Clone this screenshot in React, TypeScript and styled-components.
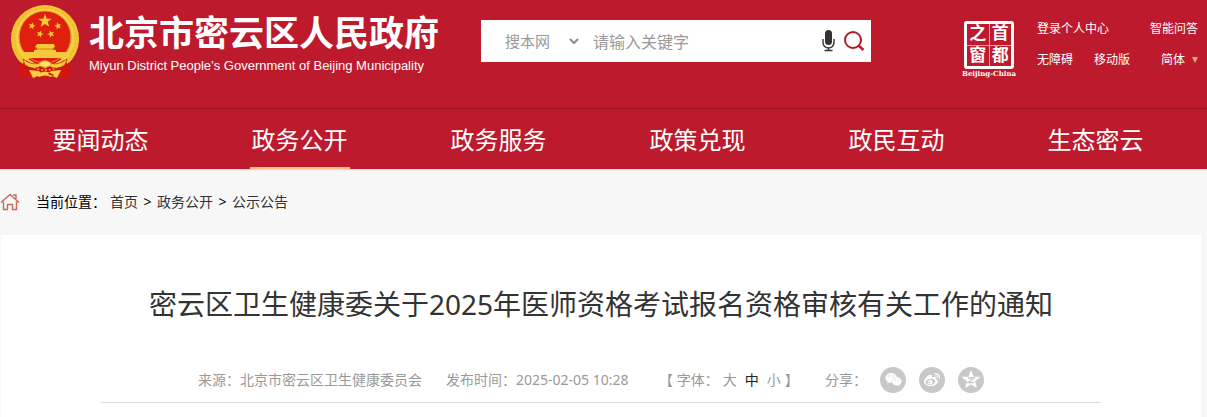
import React from "react";
import styled, { createGlobalStyle } from "styled-components";
import { FaWeixin, FaWeibo } from "react-icons/fa";

const RED = "#bd1a2d";

const GlobalStyle = createGlobalStyle`
  * { box-sizing: border-box; }
  body {
    margin: 0;
    background: #f7f7f7;
    color: #333;
    font-family: "Noto Sans", "Noto Sans CJK SC", sans-serif;
    font-size: 14px;
    line-height: 20px;
  }
  a { color: inherit; text-decoration: none; }
`;

const Header = styled.header`
  background: ${RED};
  color: #fff;
  box-shadow: 0 1px 1px rgba(189, 26, 45, 0.15);
`;

const Banner = styled.div`
  display: flex;
  align-items: flex-start;
  height: 108px;
  padding: 0 9px 0 10px;
`;

const Brand = styled.a`
  display: flex;
  gap: 9px;
  padding-top: 4px;
  white-space: nowrap;
`;

const Emblem = styled.svg`
  width: 70px;
  height: 76px;
  flex: none;
`;

const BrandText = styled.div`
  padding-top: 7px;
`;

const BrandName = styled.div`
  font-family: "Noto Sans CJK SC", sans-serif;
  font-size: 35px;
  font-weight: 700;
  line-height: 40px;
`;

const BrandEnglish = styled.div`
  margin-top: 6px;
  font-family: "Liberation Sans", sans-serif;
  font-size: 13px;
  line-height: 18px;
`;

const Search = styled.form`
  display: flex;
  align-items: center;
  flex: none;
  width: 390px;
  height: 42px;
  margin: 20px 0 0 42px;
  padding: 0 6px 0 24px;
  background: #fff;
`;

const ScopeField = styled.label`
  display: flex;
  align-items: center;
  width: 88px;
  color: #999;
`;

const Scope = styled.select`
  appearance: none;
  width: 64px;
  padding: 0;
  border: 0;
  background: none;
  color: #999;
  font: 15px/20px "Noto Sans CJK SC", sans-serif;
`;

const Keyword = styled.input`
  flex: 1;
  min-width: 0;
  height: 40px;
  padding: 0;
  border: 0;
  outline: 0;
  color: #333;
  font: 16px/24px "Noto Sans CJK SC", sans-serif;
  &::placeholder { color: #999; opacity: 1; }
`;

const IconButton = styled.button`
  display: flex;
  padding: 0;
  border: 0;
  background: none;
  margin-left: 8px;
`;

const Seal = styled.a`
  display: flex;
  flex-direction: column;
  align-items: center;
  width: 56px;
  margin: 21px 0 0 auto;
`;

const SealFrame = styled.span`
  display: grid;
  grid-template-columns: 1fr 1fr;
  grid-template-rows: 1fr 1fr;
  gap: 1px;
  width: 50px;
  height: 48px;
  border: 3px solid #fff;
  border-radius: 3px;
  background: #e9a9b0;
`;

const SealChar = styled.span`
  display: flex;
  align-items: center;
  justify-content: center;
  background: ${RED};
  font: 600 17px/18px "Liberation Sans", "Noto Sans CJK SC", sans-serif;
`;

const SealCaption = styled.span`
  font: 700 7px/9px "DejaVu Serif", serif;
`;

const Tools = styled.nav`
  display: flex;
  flex-direction: column;
  gap: 13px;
  width: 161px;
  margin: 20px 0 0 20px;
  font-size: 12px;
  line-height: 18px;
`;

const ToolRow = styled.div`
  display: flex;
  justify-content: space-between;
`;

const ToolGroup = styled.div`
  display: flex;
  gap: 21px;
`;

const Language = styled.button`
  display: flex;
  align-items: center;
  gap: 7px;
  padding: 0;
  border: 0;
  background: none;
  color: inherit;
  font: inherit;
`;

const MainNav = styled.nav`
  display: grid;
  grid-template-columns: repeat(6, 1fr);
  padding: 0 12px 0 1px;
  border-top: 1px solid #931222;
`;

const NavCell = styled.div`
  display: flex;
  justify-content: center;
`;

const NavLink = styled.a<{ $active?: boolean }>`
  width: 100px;
  height: 60px;
  border-bottom: 2px solid ${(p) => (p.$active ? "#ffc184" : "transparent")};
  font-size: 24px;
  line-height: 62px;
  text-align: center;
  white-space: nowrap;
`;

const Crumbs = styled.nav`
  display: flex;
  align-items: center;
  height: 66px;
  color: #333;
`;

const CrumbLabel = styled.span`
  margin: 0 4px 0 16px;
  color: #000;
`;

const Separator = styled.span`
  width: 19px;
  color: #000;
  text-align: center;
`;

const Article = styled.main`
  margin: 0 6px 0 1px;
  padding: 48px 100px 14px;
  background: #fff;
`;

const Title = styled.h1`
  margin: 0;
  font-size: 28px;
  font-weight: 400;
  line-height: 42px;
  text-align: center;
  white-space: nowrap;
`;

const Meta = styled.div`
  display: flex;
  align-items: center;
  height: 46px;
  margin-top: 32px;
  padding-left: 97px;
  border-bottom: 1px solid #dcdcdc;
  color: #999;
  white-space: nowrap;
`;

const Source = styled.span`
  width: 248px;
`;

const Published = styled.span`
  width: 213px;
`;

const FontSize = styled.div`
  display: flex;
  width: 166px;
`;

const SizeButton = styled.button<{ $active?: boolean }>`
  width: 22px;
  padding: 0;
  border: 0;
  background: none;
  color: ${(p) => (p.$active ? "#222" : "inherit")};
  font: inherit;
`;

const Share = styled.div`
  display: flex;
  align-items: center;
`;

const ShareLabel = styled.span`
  width: 55px;
`;

const ShareButton = styled.button`
  display: flex;
  align-items: center;
  justify-content: center;
  width: 26px;
  height: 26px;
  margin-right: 13px;
  padding: 0;
  border: 0;
  border-radius: 50%;
  background: #c8c8c8;
  color: #fff;
`;

const STAR = "M0-10 2.4-3.2 9.5-3.1 3.8 1.2 5.9 8.1 0 4-5.9 8.1-3.8 1.2-9.5-3.1-2.4-3.2Z";

const smallStars = [
  [22, 22, 15],
  [48, 22, -15],
  [30, 30, 20],
  [41, 30, -20],
];

function NationalEmblem() {
  return (
    <Emblem viewBox="0 0 70 76" aria-hidden="true">
      <path d="M10 52L10 72l8 2 5-2 12 3 12-3 5 2 8-2V52z" fill="#d3160f" />
      <path d="M13 61v11M18 65v8M52 65v8M57 61v11" stroke="#96100f" strokeWidth="2" />
      <path d="M12 60A34 34 0 1 1 58 60L50 54H20Z" fill="#f4c534" />
      <circle cx="35" cy="35" r="31" fill="none" stroke="#ecb732" strokeWidth="1.5" strokeDasharray="2 2" pathLength="200" />
      <circle cx="35" cy="34" r="28" fill="none" stroke="#f8d24a" strokeWidth="2" />
      <circle cx="35" cy="33" r="26" fill="#e0200f" stroke="#e39a22" />
      <g fill="#f6c83a">
        <path d={STAR} transform="translate(35 17) scale(.72)" />
        {smallStars.map(([x, y, r]) => (
          <path key={x} d={STAR} transform={`translate(${x} ${y}) rotate(${r}) scale(.38)`} />
        ))}
        <path d="M27 40h17l1 3-2 1v2h3v3H24v-3h3v-2l-2-1z" />
        <path d="M12 48h46l-3 6H15z" />
      </g>
      <path d="M25 45h20" stroke="#d5860f" />
      <path d="M11 58q5 8 12 9l-3 7-10-3zM59 58q-5 8-12 9l3 7 10-3z" fill="#d3160f" />
      <path d="M13 55q11 8 18 3 4-4 8 0 7 5 18-3l-2 6q-9 6-16 1l-4 3-4-3q-7 5-16-1z" fill="#f7cb39" stroke="#cb1910" strokeWidth=".7" />
      <ellipse cx="35" cy="60" rx="6" ry="3" fill="#ffe366" stroke="#e0a01d" strokeWidth=".7" />
      <path d="M19 66l10 1 3 3-9 4zM51 66l-10 1-3 3 9 4zM26 71q9-7 18 0l-3 2q-6-3-12 0z" fill="#f8cf42" />
    </Emblem>
  );
}

const navItems = ["要闻动态", "政务公开", "政务服务", "政策兑现", "政民互动", "生态密云"];

export default function App() {
  return (
    <>
      <GlobalStyle />
      <Header>
        <Banner>
          <Brand href="#">
            <NationalEmblem />
            <BrandText>
              <BrandName>北京市密云区人民政府</BrandName>
              <BrandEnglish>Miyun District People’s Government of Beijing Municipality</BrandEnglish>
            </BrandText>
          </Brand>
          <Search onSubmit={(e) => e.preventDefault()}>
            <ScopeField>
              <Scope aria-label="搜索范围">
                <option>搜本网</option>
              </Scope>
              <svg width="10" height="8" viewBox="0 0 10 8" fill="none" stroke="#8c8c8c" strokeWidth="2" aria-hidden="true">
                <path d="M1 2l4 4 4-4" />
              </svg>
            </ScopeField>
            <Keyword aria-label="关键字" placeholder="请输入关键字" />
            <IconButton type="button" aria-label="语音">
              <svg width="13" height="22" viewBox="0 0 13 22" aria-hidden="true">
                <rect x="3" y="0" width="7" height="15" rx="3.5" fill="#333" />
                <path d="M1 9v3.5a5.5 5.5 0 0 0 11 0V9M6.5 18v3M2.5 20.5h8" fill="none" stroke="#333" strokeWidth="1.4" />
              </svg>
            </IconButton>
            <IconButton type="submit" aria-label="搜索">
              <svg width="22" height="20" viewBox="0 0 22 20" fill="none" stroke="#b01c2e" strokeWidth="2" aria-hidden="true">
                <circle cx="10" cy="9" r="8" />
                <path d="M15.5 14.5l5 4.5" strokeWidth="2.4" />
              </svg>
            </IconButton>
          </Search>
          <Seal href="#">
            <SealFrame>
              {["之", "首", "窗", "都"].map((c) => (
                <SealChar key={c}>{c}</SealChar>
              ))}
            </SealFrame>
            <SealCaption>Beijing-China</SealCaption>
          </Seal>
          <Tools>
            <ToolRow>
              <a href="#">登录个人中心</a>
              <a href="#">智能问答</a>
            </ToolRow>
            <ToolRow>
              <ToolGroup>
                <a href="#">无障碍</a>
                <a href="#">移动版</a>
              </ToolGroup>
              <Language type="button">
                简体
                <svg width="6" height="6" viewBox="0 0 6 6" aria-hidden="true">
                  <path d="M0 0h6L3 6z" fill="#e8a46c" />
                </svg>
              </Language>
            </ToolRow>
          </Tools>
        </Banner>
        <MainNav>
          {navItems.map((item) => (
            <NavCell key={item}>
              <NavLink href="#" $active={item === "政务公开"}>
                {item}
              </NavLink>
            </NavCell>
          ))}
        </MainNav>
      </Header>
      <Crumbs>
        <svg width="20" height="18" viewBox="0 0 20 18" fill="none" stroke="#cc6a5a" strokeWidth="1.4" aria-hidden="true">
          <path d="M1 9.5L10 1.5l9 8M13 2h3v4M3.5 8.5v8h4v-5h5v5h4v-8" />
        </svg>
        <CrumbLabel>当前位置：</CrumbLabel>
        <a href="#">首页</a>
        <Separator>&gt;</Separator>
        <a href="#">政务公开</a>
        <Separator>&gt;</Separator>
        <a href="#">公示公告</a>
      </Crumbs>
      <Article>
        <Title>密云区卫生健康委关于2025年医师资格考试报名资格审核有关工作的通知</Title>
        <Meta>
          <Source>来源：北京市密云区卫生健康委员会</Source>
          <Published>发布时间：2025-02-05 10:28</Published>
          <FontSize>
            <span>【 字体：</span>
            <SizeButton type="button">大</SizeButton>
            <SizeButton type="button" $active>中</SizeButton>
            <SizeButton type="button">小</SizeButton>
            <span>】</span>
          </FontSize>
          <Share>
            <ShareLabel>分享：</ShareLabel>
            <ShareButton type="button" aria-label="微信">
              <FaWeixin size={17} />
            </ShareButton>
            <ShareButton type="button" aria-label="微博">
              <FaWeibo size={16} />
            </ShareButton>
            <ShareButton type="button" aria-label="QQ空间">
              <svg width="20" height="20" viewBox="-10 -10 20 20" aria-hidden="true">
                <path d={STAR} fill="#fff" stroke="#fff" strokeWidth="1.5" strokeLinejoin="round" transform="scale(.86)" />
                <path d="M-3-2h6l-6 4.5h6" fill="none" stroke="#c8c8c8" strokeWidth="1.3" />
              </svg>
            </ShareButton>
          </Share>
        </Meta>
      </Article>
    </>
  );
}
